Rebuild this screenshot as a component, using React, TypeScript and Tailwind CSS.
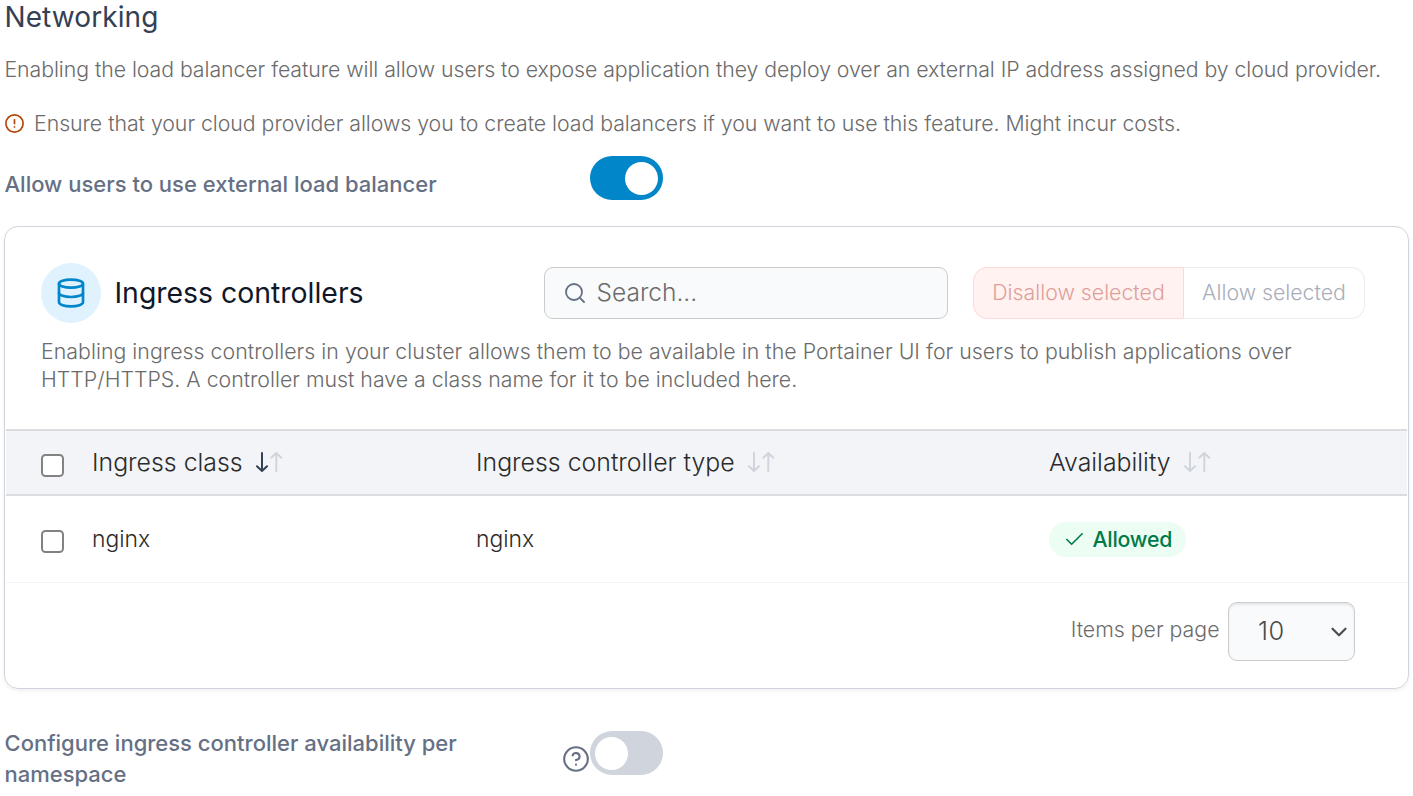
import type { ReactNode } from "react";
import { Check, ChevronDown, Database, Search } from "lucide-react";

function SortArrows({ active = false }: { active?: boolean }) {
  return (
    <svg width="30" height="24" viewBox="0 0 30 24" fill="none" strokeWidth="2" strokeLinecap="round" strokeLinejoin="round">
      <path className={active ? "stroke-[#344054]" : "stroke-[#d0d5dd]"} d="M8 3V21M3 16.3L8 21L13 16.3" />
      <path className="stroke-[#d0d5dd]" d="M22.3 21V3M17.3 7.7L22.3 3L27.3 7.7" />
    </svg>
  );
}

function Toggle({ on = false }: { on?: boolean }) {
  return (
    <button
      role="switch"
      aria-checked={on}
      className={
        on
          ? "flex h-11 w-[73px] shrink-0 items-center justify-end rounded-full bg-[#0086c9] pr-[5px]"
          : "flex h-11 w-[73px] shrink-0 items-center rounded-full bg-[#d0d5dd] pl-[5px]"
      }
    >
      <span className="size-[33px] rounded-full bg-white" />
    </button>
  );
}

function HeaderCell({ children, active }: { children: ReactNode; active?: boolean }) {
  return (
    <div className="mb-[2px] flex items-center gap-[11px] text-[24.85px] leading-8 text-[#2b2b2b]">
      <span className="whitespace-nowrap">{children}</span>
      <SortArrows active={active} />
    </div>
  );
}

function Box() {
  return <span role="checkbox" aria-checked="false" className="mt-[5px] size-[23px] rounded-[4.5px] border-2 border-[#828282] bg-white" />;
}

export default function App() {
  return (
    <main className="h-[796px] w-[1413px] overflow-hidden bg-white font-['Inter',sans-serif] font-light [font-optical-sizing:none]">
      <h1 className="h-[34px] pl-[4.5px] text-[28px] leading-[34px] font-normal tracking-[0.1px] text-[#344054]">Networking</h1>
      <p className="mt-[19px] h-8 pl-[4.5px] text-[21.3px] leading-8 tracking-[-0.065px] whitespace-nowrap text-[#6b6b6b]">
        Enabling the load balancer feature will allow users to expose application they deploy over an external IP address assigned by cloud provider.
      </p>
      <div className="mt-[22px] flex h-8 items-center pl-[5px] text-[21.3px] leading-8 tracking-[-0.035px] whitespace-nowrap text-[#6b6b6b]">
        <svg className="mr-[10px]" width="19" height="19" viewBox="0 0 19 19" fill="none" stroke="#b54708" strokeWidth="1.7" strokeLinecap="round">
          <circle cx="9.5" cy="9.5" r="8.6" />
          <path d="M9.5 5.8V9.6M9.5 12.9V13" />
        </svg>
        Ensure that your cloud provider allows you to create load balancers if you want to use this feature. Might incur costs.
      </div>
      <div className="mt-[17px] flex h-11 pl-[4.5px]">
        <span className="w-[585.5px] pt-[12px] text-[22px] leading-8 font-medium text-[#667085]">Allow users to use external load balancer</span>
        <Toggle on />
      </div>

      <section className="mt-[26px] ml-1 flex h-[463px] w-[1405px] flex-col rounded-[14px] border border-[#d0d5dd] px-px shadow-[0_2px_4px_rgba(16,24,40,0.06)]">
        <div className="mt-9 flex h-[60px] items-center pl-[35px]">
          <span className="flex size-[60px] items-center justify-center rounded-full bg-[#e0f2fe]">
            <Database size={32} strokeWidth={2} className="text-[#0086c9]" />
          </span>
          <h2 className="ml-[13.5px] w-[429.5px] text-[28.4px] leading-9 font-normal text-[#101828]">Ingress controllers</h2>
          <div className="flex h-[52px] w-[404px] items-center rounded-[9px] border border-[#cccccc] bg-[#f9fafb] pl-[18px] text-[24.5px] text-[#6b6b6b]">
            <Search size={24} strokeWidth={1.8} className="mr-[9.5px] text-[#667085]" />
            <span className="-mt-[2px]">Search...</span>
          </div>
          <div className="ml-[25px] flex h-[52px] text-[21.3px]">
            <button className="w-[211px] rounded-l-[14px] border border-[#fcdad7] bg-[#fff2f1] text-[#e19f99]">Disallow selected</button>
            <button className="w-[181px] rounded-r-[14px] border border-l-0 border-[#eaecee] bg-white text-[#a8aebb]">Allow selected</button>
          </div>
        </div>
        <p className="mt-[14px] h-[92px] pl-[35px] text-[21.3px] leading-7 whitespace-nowrap text-[#6b6b6b]">
          <span className="tracking-[0.038px]">
            Enabling ingress controllers in your cluster allows them to be available in the Portainer UI for users to publish applications over
          </span>
          <br />
          <span>HTTP/HTTPS. A controller must have a class name for it to be included here.</span>
        </p>

        <div className="grid h-[67px] shrink-0 grid-cols-[51px_384px_573px_1fr] items-center border-y-2 border-[#dcdcdf] bg-[#f2f4f7] pl-[35px]">
          <Box />
          <HeaderCell active>Ingress class</HeaderCell>
          <HeaderCell>Ingress controller type</HeaderCell>
          <HeaderCell>Availability</HeaderCell>
        </div>
        <div className="grid h-[87px] shrink-0 grid-cols-[51px_384px_573px_1fr] items-center border-b border-[#f2f4f7] pl-[35px] text-[22.9px] text-[#2b2b2b]">
          <Box />
          <span>nginx</span>
          <span>nginx</span>
          <span className="flex h-[35px] w-[137px] items-center rounded-full bg-[#ecfdf3] pl-[14px] text-[21.3px] font-medium tracking-[-0.25px] text-[#027a48]">
            <Check size={23} strokeWidth={1.7} className="mr-[6.5px]" />
            <span className="pt-px">Allowed</span>
          </span>
        </div>
        <div className="mt-[19px] flex h-[59px] items-center justify-end pr-[52px]">
          <span className="mr-[8.5px] -mt-1 text-[21.3px] text-[#6b6b6b]">Items per page</span>
          <div className="flex h-[59px] w-[127px] items-center justify-between rounded-[9px] border border-[#cccccc] bg-[#f9fafb] pr-[2px] pl-[29px] text-[25.4px] tracking-[0.6px] text-[#4c4c4c] shadow-[inset_0_2px_2px_rgba(0,0,0,0.075)]">
            10
            <ChevronDown size={26} strokeWidth={2} />
          </div>
        </div>
      </section>

      <div className="mt-[42px] flex h-16 pl-[4.5px]">
        <span className="-mt-[3px] w-[558.5px] text-[22px] leading-[31px] font-medium text-[#667085]">
          Configure ingress controller availability per
          <br />
          namespace
        </span>
        <svg className="mt-[15px] mr-px" width="26" height="26" viewBox="0 0 26 26" fill="none" stroke="#667085" strokeWidth="2.1" strokeLinecap="round" strokeLinejoin="round">
          <circle cx="13" cy="13" r="11.8" />
          <path d="M9.6 9.5A3.6 3.6 0 0 1 16.6 10.7C16.6 13.1 13 14.1 13 14.1M13 18.6V18.7" />
        </svg>
        <Toggle />
      </div>
    </main>
  );
}
